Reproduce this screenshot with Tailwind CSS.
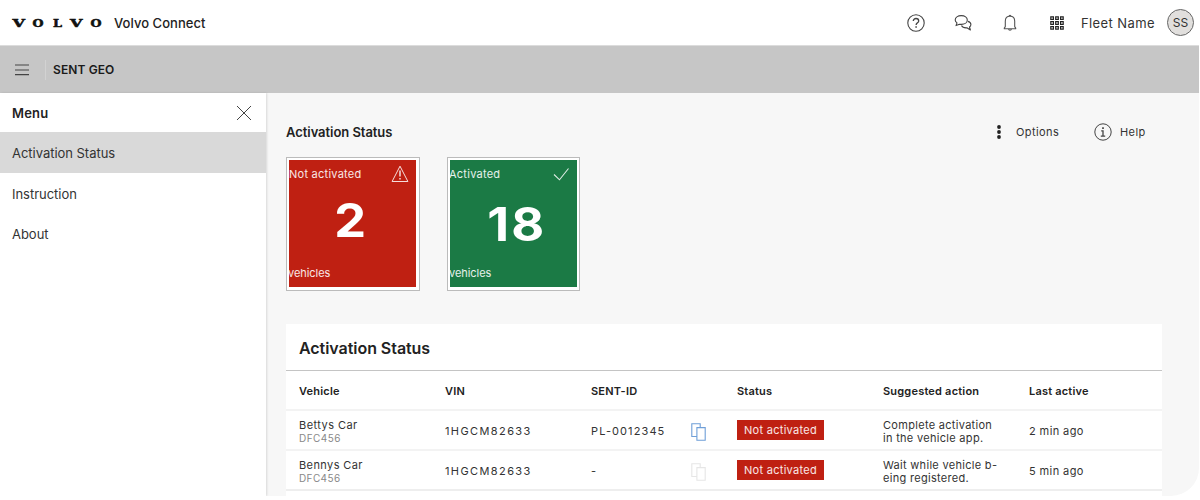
<!DOCTYPE html>
<html lang="en">
<head>
    <meta charset="UTF-8">
    <meta name="viewport" content="width=device-width, initial-scale=1.0">
    <title>Volvo Connect - SENT GEO</title>
    <script src="https://cdn.jsdelivr.net/npm/@tailwindcss/browser@4"></script>
</head>
<body class="bg-white font-['Inter',sans-serif] text-[#222]">

    <div class="w-[1199px] h-[496px] bg-[#f7f7f7] rounded-br-[28px] overflow-hidden flex flex-col">

        <!-- Top bar -->
        <header class="h-[46px] shrink-0 bg-white border-b border-[#dcdcdc] flex items-center pl-3 pr-[5px]">
            <svg class="w-[90px] h-3 overflow-visible shrink-0 font-['DejaVu_Serif',serif] font-bold text-[10.5px]" viewBox="0 0 90 12" fill="#111" stroke="#111" stroke-width=".5">
                <text x="0.500" y="9.800" textLength="12.500" lengthAdjust="spacingAndGlyphs">V</text>
                <text x="20.500" y="9.800" textLength="11" lengthAdjust="spacingAndGlyphs">O</text>
                <text x="41" y="9.800" textLength="9" lengthAdjust="spacingAndGlyphs">L</text>
                <text x="58" y="9.800" textLength="12.500" lengthAdjust="spacingAndGlyphs">V</text>
                <text x="78.500" y="9.800" textLength="11" lengthAdjust="spacingAndGlyphs">O</text>
            </svg>
            <span class="ml-3 pt-0.5 text-[13px] font-medium tracking-[0.05px]">Volvo Connect</span>

            <div class="ml-auto flex items-center">
                <svg class="w-[18px] h-[18px]" viewBox="0 0 18 18" fill="none" stroke="#444" stroke-width="1.1">
                    <circle cx="9" cy="9" r="8.200"/>
                    <path d="M6.300 7.100C6.300 5.400 7.500 4.500 9 4.500s2.700.9 2.700 2.400c0 1.900-2.600 2-2.600 4.200" stroke-width="1.300"/>
                    <path d="M9.100 12.300v1.500" stroke-width="1.500"/>
                </svg>
                <svg class="ml-[29px] w-[18px] h-[18px]" viewBox="0 0 18 18" fill="none" stroke="#444" stroke-width="1.100" stroke-linejoin="round">
                    <path d="M7.300 1.600c3.500 0 6 1.900 6 4.400s-2.500 4.400-6 4.400c-.6 0-1.200-.1-1.800-.2L2 11.600l1-2.700C1.800 8.100 1.200 7.100 1.200 6c0-2.500 2.600-4.400 6.100-4.400z"/>
                    <path d="M13.900 7.400c1.800.5 3 1.700 3 3.100 0 1-.5 1.900-1.400 2.500l.9 3-3.500-2.200c-2.500.2-4.600-.7-5.400-2.400"/>
                </svg>
                <svg class="ml-[29px] w-[18px] h-[18px]" viewBox="0 0 18 18" fill="none" stroke="#555" stroke-width="1.100" stroke-linejoin="round">
                    <path d="M8 2.300C8 .9 10 .9 10 2.300M4.300 12.600V7.200c0-2.900 2-4.900 4.700-4.900s4.700 2 4.700 4.900v5.400l1 1.500v.7H3.300v-.7zM7.500 15c.3 1.600 2.700 1.600 3 0"/>
                </svg>
                <svg class="ml-[31px] w-[14px] h-[14px]" viewBox="0 0 14 14" fill="none" stroke="#222" stroke-width="1.200">
                    <path d="M.8.8h2.600v2.600H.8zM5.700.8h2.600v2.600H5.700zM10.600.8h2.600v2.600h-2.600zM.8 5.700h2.600v2.600H.8zM5.700 5.700h2.600v2.600H5.700zM10.600 5.700h2.600v2.600h-2.600zM.8 10.600h2.600v2.600H.8zM5.700 10.600h2.600v2.600H5.700zM10.600 10.600h2.600v2.600h-2.600z"/>
                </svg>
                <span class="ml-[17px] w-[73px] pt-0.5 text-[13px] tracking-[0.4px] text-[#333] whitespace-nowrap">Fleet Name</span>
                <span class="ml-[13px] w-[27px] h-[27px] rounded-full border border-[#666] bg-[#e1dfdd] flex items-center justify-center text-xs text-[#333]">SS</span>
            </div>
        </header>

        <!-- App bar -->
        <div class="h-[47px] shrink-0 bg-[#c6c6c6] flex items-center pl-[15px]">
            <svg class="w-[14px] h-3" viewBox="0 0 14 12" stroke="#444" stroke-width="1.200">
                <path d="M0 1h14M0 6h14M0 10.700h14"/>
            </svg>
            <span class="ml-4 w-px h-5 bg-[#d2d2d2]"></span>
            <span class="ml-[7px] text-xs font-semibold tracking-[0.1px] text-[#1a1a1a]">SENT GEO</span>
        </div>

        <div class="flex flex-1 min-h-0">
            <!-- Side menu -->
            <nav class="w-[266px] shrink-0 bg-white shadow-[1px_0_2px_rgba(0,0,0,0.12)] text-[13px] tracking-[-0.03px] text-[#333]">
                <div class="h-[39px] flex items-center justify-between pl-3 pr-[14px]">
                    <span class="pt-0.5 font-semibold tracking-[0.2px] text-[#222]">Menu</span>
                    <svg class="w-4 h-4" viewBox="0 0 16 16" stroke="#444" stroke-width="1">
                        <path d="M1 1l14 14M15 1L1 15"/>
                    </svg>
                </div>
                <a class="h-[41px] flex items-center pl-3 pt-[3px] bg-[#d9d9d9]">Activation Status</a>
                <a class="h-10 flex items-center pl-3 pt-[3px]">Instruction</a>
                <a class="h-10 flex items-center pl-3 pt-[3px]">About</a>
            </nav>

            <main class="flex-1 min-w-0 pl-5 pr-[37px]">
                <div class="h-16 pt-[14px] flex items-center justify-between pr-4">
                    <h1 class="pt-px text-[13px] font-semibold tracking-[-0.05px]">Activation Status</h1>
                    <div class="flex items-center text-[11px] tracking-[0.4px] text-[#333]">
                        <svg class="w-1 h-[14px]" viewBox="0 0 4 14" fill="#222">
                            <circle cx="2" cy="2" r="1.900"/><circle cx="2" cy="7" r="1.900"/><circle cx="2" cy="12" r="1.900"/>
                        </svg>
                        <span class="ml-[15px] w-[44px]">Options</span>
                        <svg class="ml-[34px] w-[18px] h-[18px]" viewBox="0 0 18 18" fill="none" stroke="#444" stroke-width="1">
                            <circle cx="9" cy="9" r="8.200"/>
                            <path d="M9 4.300V6" stroke-width="1.700"/>
                            <path d="M7.200 7.900H9v5M6.800 13.200h4.400" stroke-width="1.300"/>
                        </svg>
                        <span class="ml-2 w-[26px]">Help</span>
                    </div>
                </div>

                <!-- Status tiles -->
                <div class="flex gap-[27px]">
                    <div class="w-[134px] h-[134px] bg-white border border-[#bbb] pt-0.5 pl-0.5 pr-[3px] pb-[3px]">
                        <div class="h-full bg-[#bf2012] text-white flex flex-col overflow-hidden pt-[5px] text-[11px] tracking-[0.25px]">
                            <div class="h-[18px] flex justify-between items-center pr-[7px]">
                                <span class="text-white/90">Not activated</span>
                                <svg class="w-[18px] h-[18px]" viewBox="0 0 18 18" fill="none" stroke="#fff" stroke-opacity=".85">
                                    <path d="M9 1.200L16.900 16.500H1.100z"/>
                                    <path d="M9 5.500v6M9 13v1.500" stroke-width="1.500"/>
                                </svg>
                            </div>
                            <span class="mt-[15px] text-[46px] leading-[44px] font-bold text-center pr-1 scale-x-110">2</span>
                            <span class="mt-auto mb-[6px] -ml-px tracking-[-0.05px] text-white/90">vehicles</span>
                        </div>
                    </div>
                    <div class="w-[133px] h-[134px] bg-white border border-[#bbb] pt-0.5 pl-0.5 pr-0.5 pb-[3px]">
                        <div class="h-full bg-[#1b7a45] text-white flex flex-col overflow-hidden pt-[5px] text-[11px] tracking-[0.25px]">
                            <div class="h-[18px] flex justify-between items-center pr-[7px]">
                                <span class="-ml-px text-white/90">Activated</span>
                                <svg class="w-[18px] h-[18px]" viewBox="0 0 18 18" fill="none" stroke="#fff" stroke-opacity=".85" stroke-width="1.100">
                                    <path d="M2 9.500l5.500 5.300L16.500 3.500"/>
                                </svg>
                            </div>
                            <span class="mt-[19px] text-[46px] leading-[44px] font-bold text-center tracking-[2px] pl-1.5 scale-x-110">18</span>
                            <span class="mt-auto mb-[6px] -ml-px tracking-[-0.05px] text-white/90">vehicles</span>
                        </div>
                    </div>
                </div>

                <!-- Vehicle table -->
                <section class="mt-[33px] bg-white text-[11px] tracking-[0.3px] text-[#333]">
                    <h2 class="h-[47px] border-b border-[#c4c4c4] flex items-center pl-[13px] pt-0.5 text-base font-semibold tracking-[-0.05px] text-[#222]">Activation Status</h2>
                    <div class="grid grid-cols-6 h-10 items-center pt-[3px] border-b-2 border-[#f3f3f3] font-semibold tracking-[0.2px] text-[#222] *:pl-[13px]">
                        <span>Vehicle</span>
                        <span>VIN</span>
                        <span>SENT-ID</span>
                        <span>Status</span>
                        <span>Suggested action</span>
                        <span>Last active</span>
                    </div>
                    <div class="grid grid-cols-6 h-10 items-center pt-[3px] border-b-2 border-[#f3f3f3] *:pl-[13px]">
                        <div class="leading-[13px] tracking-[0.45px]">Bettys Car<br><span class="text-[10px] text-[#888]">DFC456</span></div>
                        <div class="tracking-[1.4px]">1HGCM82633</div>
                        <div class="flex items-center justify-between pr-[18px] tracking-[1.1px]">PL-0012345
                            <svg class="w-[15px] h-[18px]" viewBox="0 0 15 18" fill="none" stroke="#6f9fd8" stroke-width="1.100">
                                <path d="M5.500 13.500H.8V.8h8.400v3.500M5.900 4.600h8.300v12.600H5.900z"/>
                            </svg>
                        </div>
                        <div><span class="flex items-center justify-center w-[87px] h-5 mb-[3px] bg-[#bf2012] text-white/90">Not activated</span></div>
                        <div class="leading-[13px] whitespace-nowrap">Complete activation<br>in the vehicle app.</div>
                        <div class="tracking-[0.4px]">2 min ago</div>
                    </div>
                    <div class="grid grid-cols-6 h-10 items-center pt-[3px] border-b-2 border-[#eee] *:pl-[13px]">
                        <div class="leading-[13px] tracking-[0.4px]">Bennys Car<br><span class="text-[10px] text-[#888]">DFC456</span></div>
                        <div class="tracking-[1.4px]">1HGCM82633</div>
                        <div class="flex items-center justify-between pr-[18px]">-
                            <svg class="w-[15px] h-[18px]" viewBox="0 0 15 18" fill="none" stroke="#e6e6e6" stroke-width="1.100">
                                <path d="M5.500 13.500H.8V.8h8.400v3.500M5.900 4.600h8.300v12.600H5.900z"/>
                            </svg>
                        </div>
                        <div><span class="flex items-center justify-center w-[87px] h-5 mb-[3px] bg-[#bf2012] text-white/90">Not activated</span></div>
                        <div class="leading-[13px] whitespace-nowrap">Wait while vehicle b-<br>eing registered.</div>
                        <div class="tracking-[0.4px]">5 min ago</div>
                    </div>
                    <div class="h-[6px]"></div>
                </section>
            </main>
        </div>
    </div>

</body>
</html>
